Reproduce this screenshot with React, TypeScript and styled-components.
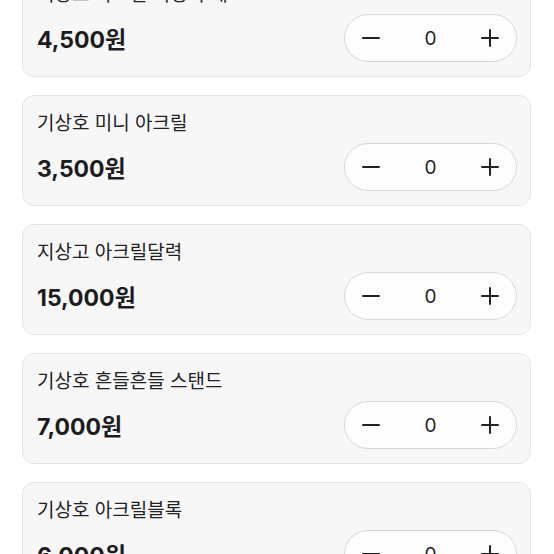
import React, { useState } from 'react'
import styled, { createGlobalStyle } from 'styled-components'

const GlobalStyle = createGlobalStyle`
  html, body {
    margin: 0;
    padding: 0;
    background: #ffffff;
    font-family: Inter, "Noto Sans CJK KR", sans-serif;
    color: #1d1d1f;
  }
`

// list is shown scrolled a little, first card peeks from above
const List = styled.div`
  display: flex;
  flex-direction: column;
  gap: 18px;
  padding: 0 23px 0 22px;
  margin-top: -34px;
`

const Card = styled.div`
  box-sizing: border-box;
  height: 111px;
  padding: 16px 13px 15px 14px;
  background: #f7f7f7;
  border: 1px solid #e6e6e6;
  border-radius: 12px;
  display: flex;
  flex-direction: column;
  gap: 7px;
`

const Title = styled.div`
  font-size: 19px;
  line-height: 24px;
  color: #222;
`

const Row = styled.div`
  display: flex;
  align-items: center;
  justify-content: space-between;
`

const Price = styled.div`
  font-size: 23px;
  font-weight: 700;
  color: #1c1c1e;
`

const Stepper = styled.div`
  box-sizing: border-box;
  width: 173px;
  height: 48px;
  border: 1px solid #d8d8d8;
  border-radius: 24px;
  background: #fdfdfd;
  display: flex;
  align-items: center;
  justify-content: space-between;
`

const StepButton = styled.button`
  width: 52px;
  height: 46px;
  border: none;
  background: transparent;
  display: flex;
  align-items: center;
  justify-content: center;
  padding: 0;
  cursor: pointer;
  color: #222;
`

const Count = styled.span`
  font-size: 19px;
  color: #222;
`

const MinusIcon = () => (
  <svg width='20' height='20' viewBox='0 0 20 20'>
    <path d='M2 10h16' stroke='currentColor' strokeWidth='2' strokeLinecap='round' />
  </svg>
)

const PlusIcon = () => (
  <svg width='20' height='20' viewBox='0 0 20 20'>
    <path d='M2 10h16M10 2v16' stroke='currentColor' strokeWidth='2' strokeLinecap='round' />
  </svg>
)

const products = [
  { name: '기상호 아크릴 키링 부채', price: '4,500원' },
  { name: '기상호 미니 아크릴', price: '3,500원' },
  { name: '지상고 아크릴달력', price: '15,000원' },
  { name: '기상호 흔들흔들 스탠드', price: '7,000원' },
  { name: '기상호 아크릴블록', price: '6,000원' }
]

function App() {
  const [counts, setCounts] = useState<number[]>(products.map(() => 0))

  const change = (index: number, diff: number) => {
    setCounts((prev) => prev.map((c, i) => (i === index ? Math.max(0, c + diff) : c)))
  }

  return (
    <>
      <GlobalStyle />
      <List>
        {products.map((product, index) => (
          <Card key={product.name}>
            <Title>{product.name}</Title>
            <Row>
              <Price>{product.price}</Price>
              <Stepper>
                <StepButton onClick={() => change(index, -1)}>
                  <MinusIcon />
                </StepButton>
                <Count>{counts[index]}</Count>
                <StepButton onClick={() => change(index, 1)}>
                  <PlusIcon />
                </StepButton>
              </Stepper>
            </Row>
          </Card>
        ))}
      </List>
    </>
  )
}

export default App
